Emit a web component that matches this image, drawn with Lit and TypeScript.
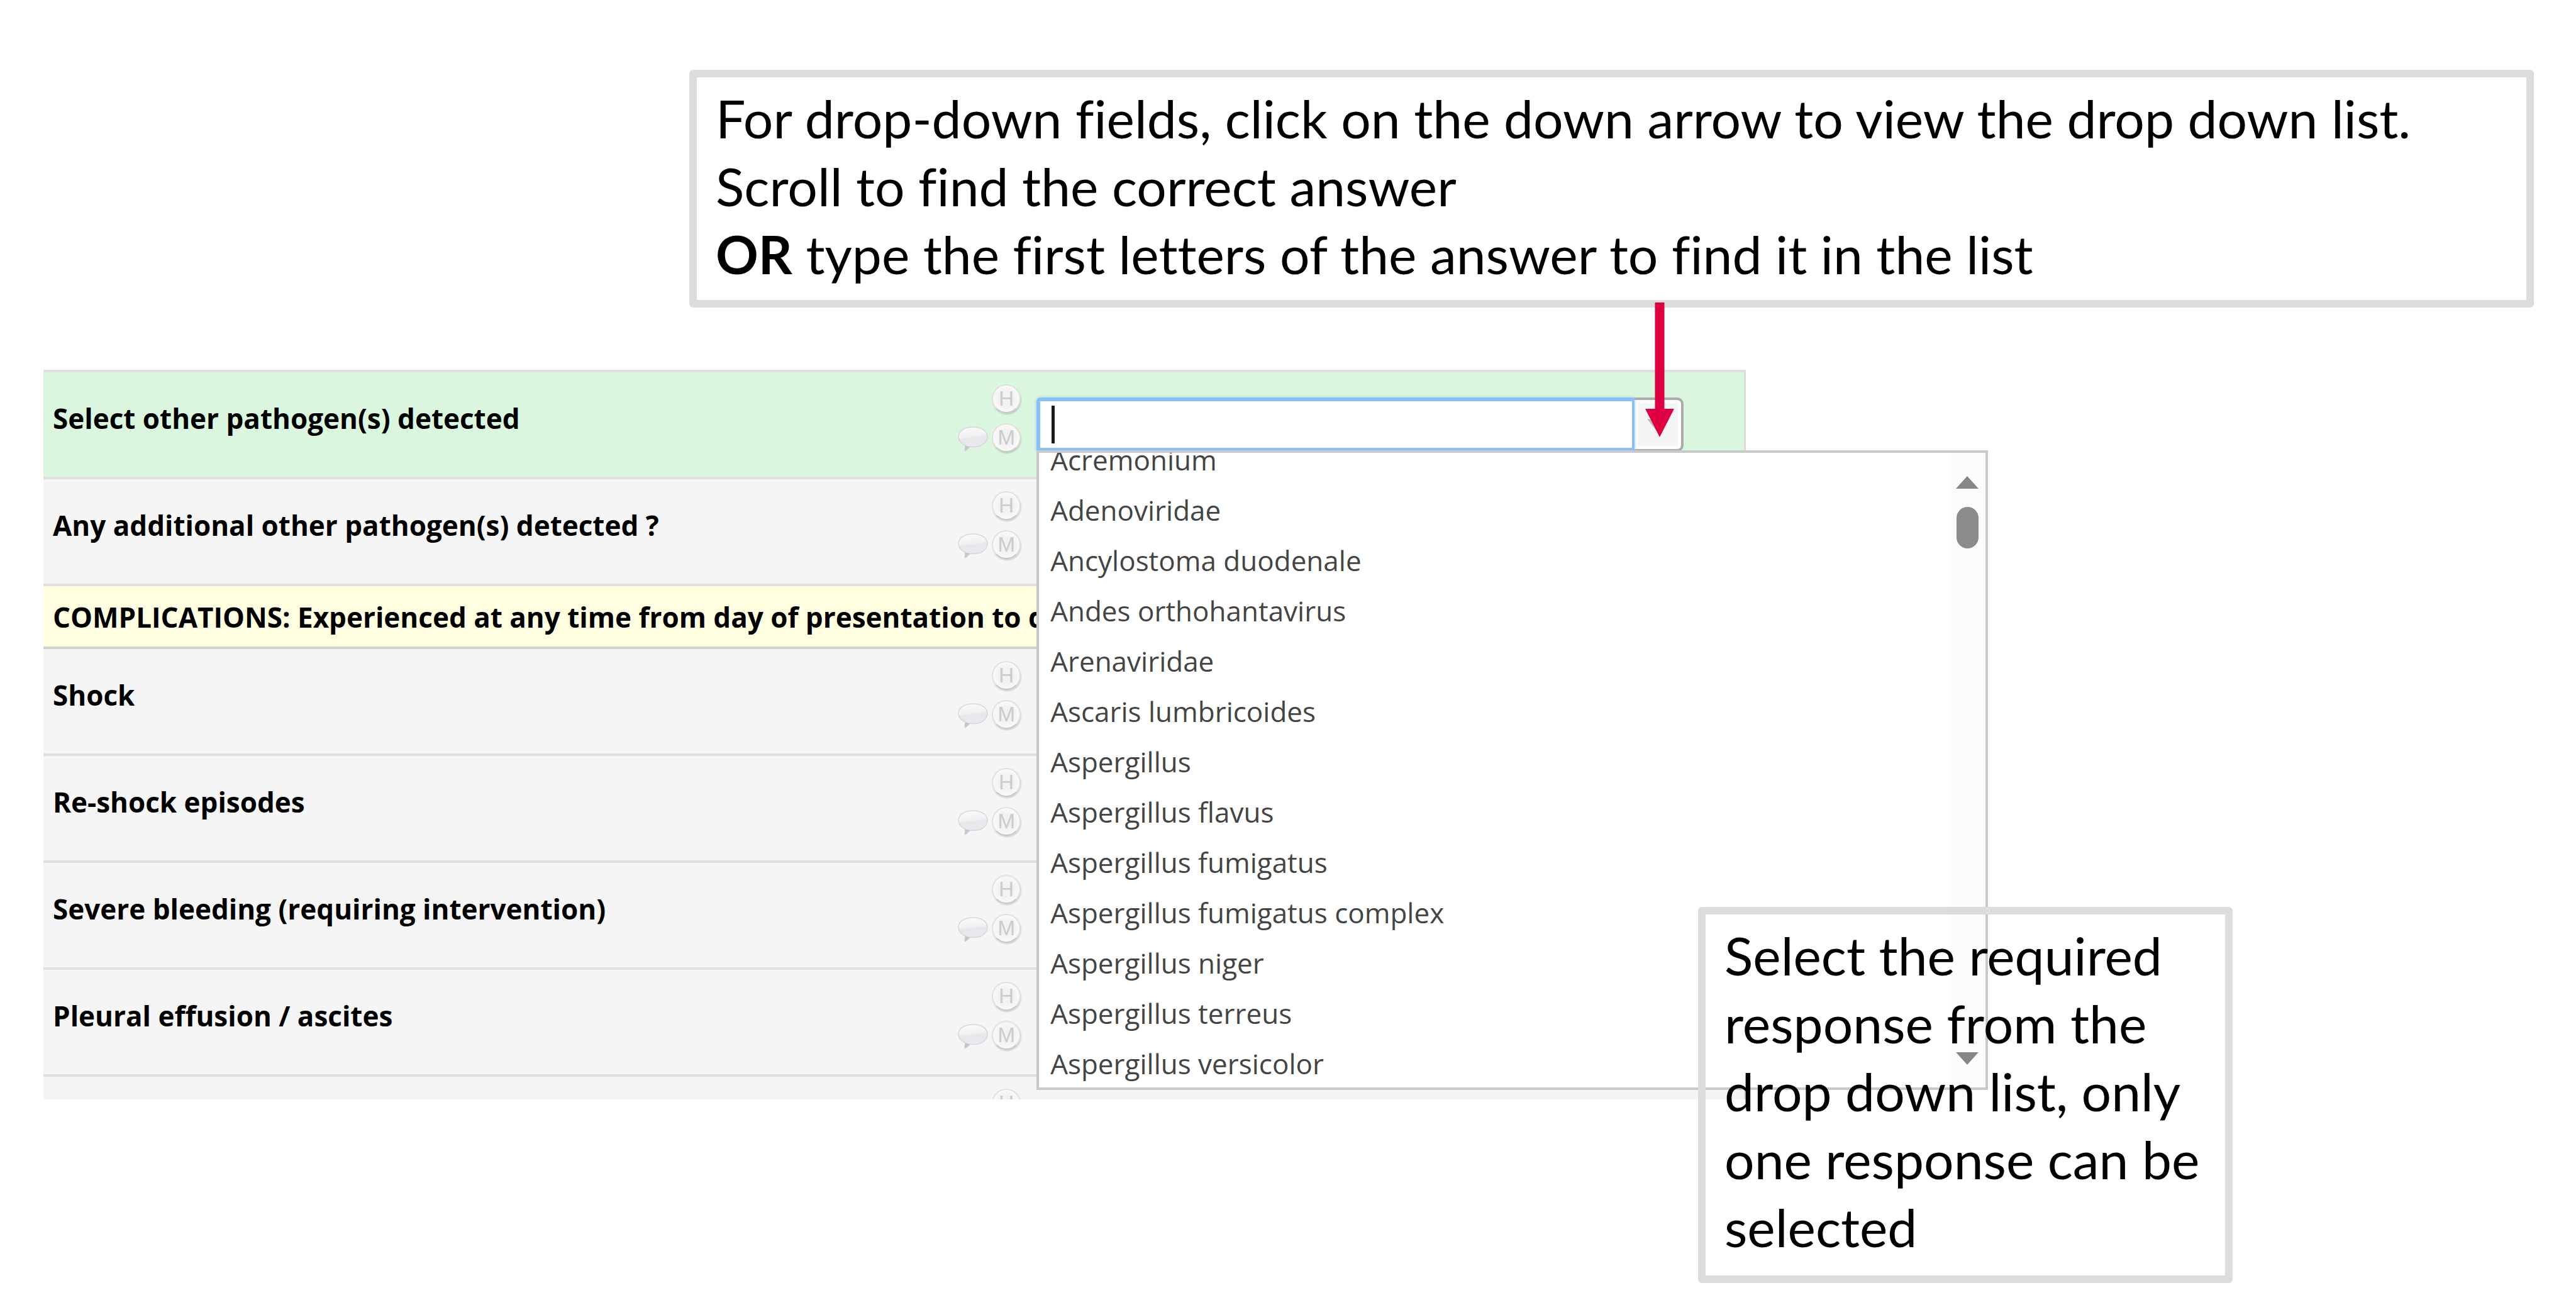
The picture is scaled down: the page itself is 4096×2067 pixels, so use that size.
import { LitElement, html, css } from "lit";
import { customElement } from "lit/decorators.js";

const PATHOGENS = [
  "Acremonium",
  "Adenoviridae",
  "Ancylostoma duodenale",
  "Andes orthohantavirus",
  "Arenaviridae",
  "Ascaris lumbricoides",
  "Aspergillus",
  "Aspergillus flavus",
  "Aspergillus fumigatus",
  "Aspergillus fumigatus complex",
  "Aspergillus niger",
  "Aspergillus terreus",
  "Aspergillus versicolor",
];

const COMPLICATIONS = [
  "Shock",
  "Re-shock episodes",
  "Severe bleeding (requiring intervention)",
  "Pleural effusion / ascites",
];

/* History, comment and missing-value buttons shown beside each field. */
@customElement("field-icons")
class FieldIcons extends LitElement {
  static styles = css`
    :host {
      display: grid;
      grid-template-columns: 50px 46px;
      grid-auto-rows: 46px;
      gap: 16px 5px;
      align-content: start;
    }
    button {
      margin: 0;
      padding: 0;
      border: 0;
      background: none;
      cursor: pointer;
    }
    .round {
      grid-column: 2;
      display: flex;
      align-items: center;
      justify-content: center;
      box-sizing: border-box;
      width: 46px;
      height: 46px;
      border: 2px solid #e0e0e0;
      border-bottom-color: #c8c8c8;
      border-radius: 50%;
      background: radial-gradient(#f2f2f2 40%, #fafafa 75%);
      box-shadow: 1px 2px 2px rgba(0, 0, 0, 0.16);
      color: #cbcbcb;
      font: 33px/40px "Liberation Sans", Arial, sans-serif;
    }
    .comment {
      grid-column: 1;
      padding-top: 4px;
    }
    svg {
      display: block;
      width: 50px;
      height: 42px;
    }
  `;

  render() {
    return html`
      <button class="round" type="button">H</button>
      <button class="comment" type="button" aria-label="Comment">
        <svg viewBox="0 0 50 42" aria-hidden="true">
          <defs>
            <linearGradient id="g" x1="0" y1="0" x2="0.15" y2="1">
              <stop offset="0" stop-color="#fbfbfb" />
              <stop offset="0.42" stop-color="#f2f2f2" />
              <stop offset="0.54" stop-color="#e6e6ea" />
              <stop offset="1" stop-color="#ebeaf4" />
            </linearGradient>
          </defs>
          <path
            d="M25 2C38 2 48 8 48 17.500C48 27 38 33.500 27 33.500C25 33.500 23 33.400 21 33L13.500 39.500C12.500 40 11.800 39.500 12 38.500L13 31C6 28 2 23.500 2 17.500C2 8 12 2 25 2Z"
            fill="url(#g)"
            stroke="#d8d6da"
            stroke-width="1.500"
          />
          <path d="M12 38.500L13 31.500L20 33L13.500 39.500Z" fill="#c6c6c8" />
        </svg>
      </button>
      <button class="round" type="button">M</button>
    `;
  }
}

/* Text box with a toggle and a scrolling list of choices. */
@customElement("pathogen-combo")
class PathogenCombo extends LitElement {
  static styles = css`
    :host {
      display: block;
      position: relative;
      margin: 40px 96px 0 0;
      z-index: 2;
    }
    .group {
      display: flex;
      height: 86px;
    }
    .box {
      position: relative;
      flex: 1;
      display: flex;
    }
    input {
      flex: 1;
      min-width: 0;
      box-sizing: border-box;
      margin: 0;
      padding: 0 20px;
      border: 6px solid #88c0f7;
      border-right-width: 4px;
      border-radius: 6px 0 0 0;
      outline: 0;
      background: #fff;
      box-shadow: 0 0 4px #9fd3e4;
      color: #444;
      font: 44px/60px "Open Sans", sans-serif;
    }
    .caret {
      position: absolute;
      left: 24px;
      top: 13px;
      width: 5px;
      height: 60px;
      background: #1a1a1a;
    }
    .toggle {
      flex: none;
      display: flex;
      align-items: center;
      justify-content: center;
      box-sizing: border-box;
      width: 78px;
      margin: 0;
      padding: 4px 0 0;
      border: 4px solid #acacac;
      border-left: 0;
      border-radius: 0 10px 10px 0;
      background: #f5f5f5;
      box-shadow: inset 0 0 0 5px #fdfdfd;
    }
    .toggle svg {
      width: 34px;
      height: 22px;
    }
    .pointer {
      position: absolute;
      right: 15px;
      top: -151px;
      width: 46px;
      height: 214px;
      z-index: 3;
    }
    .list {
      position: absolute;
      left: 0;
      top: 84px;
      display: flex;
      width: 1513px;
      box-sizing: border-box;
      border: 4px solid #c9c9c9;
      background: #fff;
    }
    ul {
      flex: 1;
      height: 1009px;
      margin: 0;
      padding: 0;
      overflow: hidden;
      list-style: none;
    }
    li {
      padding-left: 18px;
      color: #444;
      font: 44px/80px "Open Sans", sans-serif;
      white-space: nowrap;
    }
    /* The list is scrolled slightly past its first entry. */
    li:first-child {
      margin-top: -29px;
    }
    .scroll {
      display: flex;
      flex-direction: column;
      align-items: center;
      box-sizing: border-box;
      width: 58px;
      padding: 37px 0 36px;
      background: #fcfcfc;
    }
    .scroll svg {
      display: block;
      width: 36px;
      height: 20px;
    }
    .thumb {
      width: 35px;
      height: 66px;
      margin: 29px 0 auto;
      border-radius: 18px;
      background: #8b8b8b;
    }
  `;

  render() {
    return html`
      <div class="group">
        <div class="box">
          <input
            type="text"
            role="combobox"
            aria-label="Select other pathogen(s) detected"
            aria-expanded="true"
            aria-controls="choices"
            autocomplete="off"
          />
          <span class="caret"></span>
        </div>
        <button class="toggle" type="button" aria-label="Show choices">
          <svg viewBox="0 0 36 23" aria-hidden="true">
            <path d="M0 0H36L18 23Z" fill="#bcbcbc" />
          </svg>
        </button>
      </div>
      <div class="list">
        <ul id="choices" role="listbox">
          ${PATHOGENS.map((name) => html`<li role="option">${name}</li>`)}
        </ul>
        <div class="scroll">
          <svg viewBox="0 0 36 20" aria-hidden="true">
            <path d="M0 20L18 0L36 20Z" fill="#868686" />
          </svg>
          <div class="thumb"></div>
          <svg viewBox="0 0 36 20" aria-hidden="true">
            <path d="M0 0H36L18 20Z" fill="#868686" />
          </svg>
        </div>
      </div>
      <svg class="pointer" viewBox="0 0 46 214" aria-hidden="true">
        <path d="M15.500 0H30.500V169H46L23 214L0 169H15.500Z" fill="#df0043" />
      </svg>
    `;
  }
}

@customElement("app-root")
class AppRoot extends LitElement {
  static styles = css`
    :host {
      display: block;
      box-sizing: border-box;
      min-height: 100vh;
      padding: 111px 67px 28px 69px;
      overflow: hidden;
      background: #fff;
    }
    .callout {
      box-sizing: border-box;
      border: 12px solid #dcdcdc;
      border-radius: 6px;
      padding: 11px 30px 19px;
      color: #000;
      font: 84px/108px Lato, Corbel, sans-serif;
      font-variant-ligatures: none;
    }
    .callout p {
      margin: 0;
    }
    .intro {
      margin-left: 1027px;
    }
    .workspace {
      position: relative;
      margin: 99px 1253px 0 0;
    }
    .form {
      border-right: 3px solid #dcdcdc;
      background: #f5f5f5;
    }
    .row {
      display: grid;
      grid-template-columns: 58.4% 1fr;
      box-sizing: border-box;
      height: 170px;
      border-top: 4px solid #dfdfdf;
    }
    .active {
      background: #daf6df;
    }
    .question {
      display: flex;
      justify-content: space-between;
      padding: 0 25px 0 15px;
    }
    .text {
      padding-top: 43px;
      color: #000;
      font: bold 44px/60px "Open Sans", sans-serif;
      white-space: nowrap;
    }
    field-icons {
      padding-top: 19px;
    }
    .section {
      box-sizing: border-box;
      height: 100px;
      margin: 0;
      border-top: 4px solid #dfdfdf;
      padding: 19px 15px;
      overflow: hidden;
      background: #fffee0;
      color: #000;
      font: bold 44px/60px "Open Sans", sans-serif;
      white-space: nowrap;
    }
    .section + .row {
      border-top-color: #d0d0cf;
    }
    .cut {
      height: 40px;
      overflow: hidden;
    }
    .choose {
      position: absolute;
      left: 2631px;
      top: 854px;
      width: 850px;
      padding-bottom: 23px;
      z-index: 4;
    }
  `;

  private row(label: string) {
    return html`
      <div class="row">
        <div class="question">
          <span class="text">${label}</span>
          <field-icons></field-icons>
        </div>
      </div>
    `;
  }

  render() {
    return html`
      <div class="callout intro">
        <p>For drop-down fields, click on the down arrow to view the drop down list.</p>
        <p>Scroll to find the correct answer</p>
        <p><b>OR</b> type the first letters of the answer to find it in the list</p>
      </div>
      <main class="workspace">
        <form class="form">
          <div class="row active">
            <div class="question">
              <label class="text" for="pathogen">Select other pathogen(s) detected</label>
              <field-icons></field-icons>
            </div>
            <pathogen-combo id="pathogen"></pathogen-combo>
          </div>
          ${this.row("Any additional other pathogen(s) detected ?")}
          <h2 class="section">COMPLICATIONS: Experienced at any time from day of presentation to d</h2>
          ${COMPLICATIONS.map((label) => this.row(label))}
          <div class="row cut">
            <div class="question">
              <span class="text"></span>
              <field-icons></field-icons>
            </div>
          </div>
        </form>
        <div class="callout choose">
          <p>Select the required response from the drop down list, only one response can be selected</p>
        </div>
      </main>
    `;
  }
}
